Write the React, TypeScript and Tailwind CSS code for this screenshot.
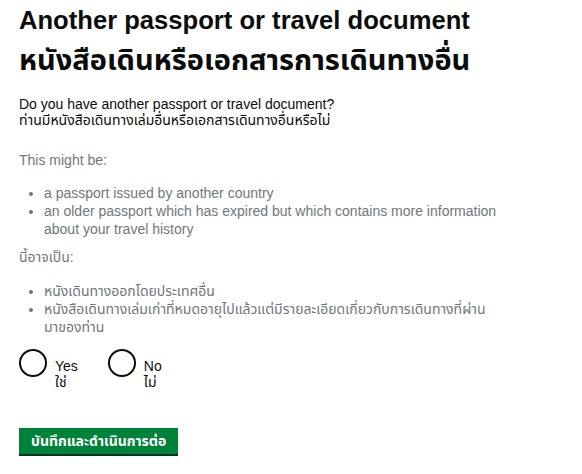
import { useState } from 'react'

const FONT = "font-['Liberation_Sans','Noto_Sans_Thai','Noto_Sans',sans-serif]"

function Radio({
  label,
  thai,
  checked,
  onSelect,
}: {
  label: string
  thai: string
  checked: boolean
  onSelect: () => void
}) {
  return (
    <label className="flex cursor-pointer items-start gap-[8px]" onClick={onSelect}>
      <span className="flex h-[28px] w-[28px] shrink-0 items-center justify-center rounded-full border-2 border-[#0b0c0c] bg-white">
        {checked && <span className="h-[14px] w-[14px] rounded-full bg-[#0b0c0c]" />}
      </span>
      <span className="pt-[9px] text-[14px] leading-[16px] text-[#0b0c0c]">
        {label}
        <br />
        {thai}
      </span>
    </label>
  )
}

export default function App() {
  const [answer, setAnswer] = useState<'yes' | 'no' | null>(null)

  return (
    <div className={`${FONT} min-h-[474px] bg-white px-[19px] pt-0 text-[#0b0c0c]`}>
      <h1 className="font-bold">
        <span className="block text-[25.6px] leading-[40px]">Another passport or travel document</span>
        <span className="block text-[29px] leading-[40px]">หนังสือเดินหรือเอกสารการเดินทางอื่น</span>
      </h1>

      <p className="mt-[16px] text-[14px] leading-[16px]">
        Do you have another passport or travel document?
        <br />
        ท่านมีหนังสือเดินทางเล่มอื่นหรือเอกสารเดินทางอื่นหรือไม่
      </p>

      <div className="mt-[23px] text-[14px] leading-[18px] text-[#6f777b]">
        <p>This might be:</p>
        <ul className="mt-[15px] list-disc pl-[25px]">
          <li>a passport issued by another country</li>
          <li>
            an older passport which has expired but which contains more information
            <br />
            about your travel history
          </li>
        </ul>

        <p className="mt-[10px]">นี้อาจเป็น:</p>
        <ul className="mt-[16px] list-disc pl-[25px]">
          <li>หนังเดินทางออกโดยประเทศอื่น</li>
          <li>
            หนังสือเดินทางเล่มเก่าที่หมดอายุไปแล้วแต่มีรายละเอียดเกี่ยวกับการเดินทางที่ผ่าน
            <br />
            มาของท่าน
          </li>
        </ul>
      </div>

      <div className="mt-[13px] flex gap-[30px]">
        <Radio label="Yes" thai="ใช่" checked={answer === 'yes'} onSelect={() => setAnswer('yes')} />
        <Radio label="No" thai="ไม่" checked={answer === 'no'} onSelect={() => setAnswer('no')} />
      </div>

      <button
        type="button"
        className="mt-[38px] h-[26px] bg-[#00823b] px-[12px] text-[14px] font-bold leading-[26px] text-white shadow-[0_2px_0_#003618]"
      >
        บันทึกและดำเนินการต่อ
      </button>
    </div>
  )
}
